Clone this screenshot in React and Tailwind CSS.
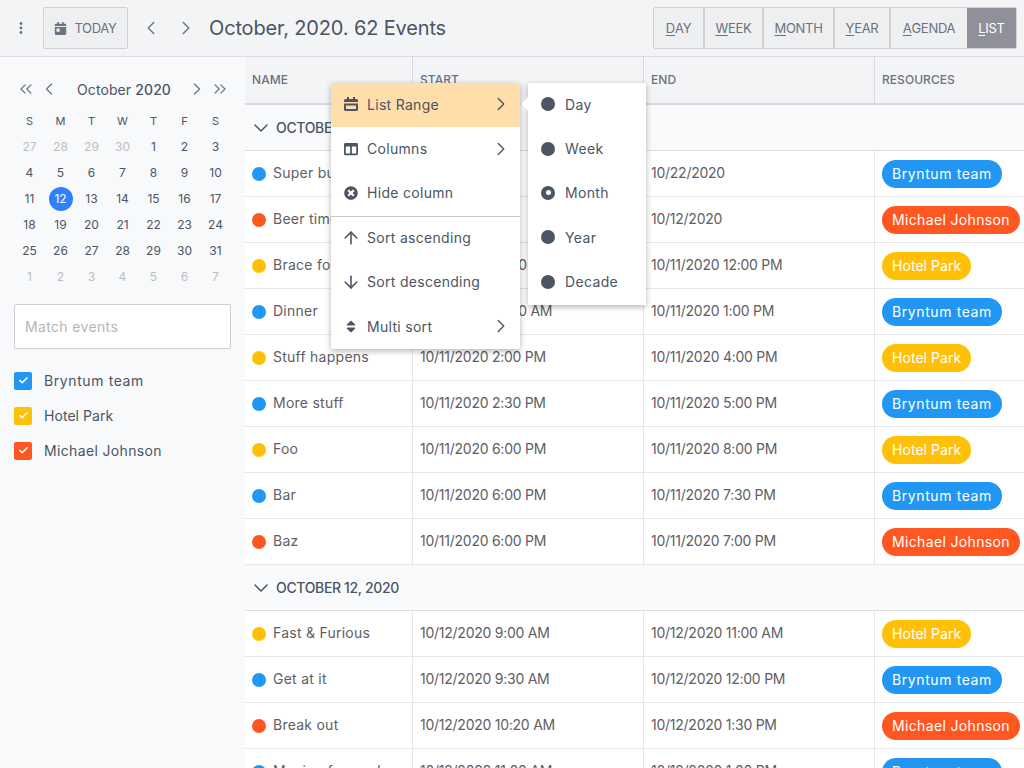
import React from "react";
import { ChevronLeft, ChevronRight, ChevronDown, ChevronsLeft, ChevronsRight, ArrowUp, ArrowDown, Check } from "lucide-react";
import { FaCalendarDay, FaColumns, FaTimesCircle, FaSort } from "react-icons/fa";

const F = { b: "#2196f3", o: "#ff5722", y: "#ffc107" };
const N = { b: "Bryntum team", o: "Michael Johnson", y: "Hotel Park" };
const T = { b: "tracking-[0.6px]", o: "tracking-[0.35px]", y: "tracking-[0.05px]" };

const group1 = [
  ["Super bug fix", "10/12/2020", "10/22/2020", "b"],
  ["Beer time", "10/11/2020", "10/12/2020", "o"],
  ["Brace for it", "10/11/2020 10:00 AM", "10/11/2020 12:00 PM", "y"],
  ["Dinner", "10/11/2020 10:30 AM", "10/11/2020 1:00 PM", "b"],
  ["Stuff happens", "10/11/2020 2:00 PM", "10/11/2020 4:00 PM", "y"],
  ["More stuff", "10/11/2020 2:30 PM", "10/11/2020 5:00 PM", "b"],
  ["Foo", "10/11/2020 6:00 PM", "10/11/2020 8:00 PM", "y"],
  ["Bar", "10/11/2020 6:00 PM", "10/11/2020 7:30 PM", "b"],
  ["Baz", "10/11/2020 6:00 PM", "10/11/2020 7:00 PM", "o"],
];
const group2 = [
  ["Fast & Furious", "10/12/2020 9:00 AM", "10/12/2020 11:00 AM", "y"],
  ["Get at it", "10/12/2020 9:30 AM", "10/12/2020 12:00 PM", "b"],
  ["Break out", "10/12/2020 10:20 AM", "10/12/2020 1:30 PM", "o"],
  ["Moving forward", "10/12/2020 11:00 AM", "10/12/2020 1:00 PM", "b"],
];

const weeks = [
  [27, 28, 29, 30, 1, 2, 3],
  [4, 5, 6, 7, 8, 9, 10],
  [11, 12, 13, 14, 15, 16, 17],
  [18, 19, 20, 21, 22, 23, 24],
  [25, 26, 27, 28, 29, 30, 31],
  [1, 2, 3, 4, 5, 6, 7],
];

const COLS = "grid grid-cols-[168px_231px_231px_1fr]";

function Row({ r }) {
  const [name, start, end, k] = r;
  return (
    <div className={`${COLS} h-[46px] border-b border-[#e6e6e8] bg-white text-[14px] text-[#5e5e63]`}>
      <div className="flex items-center gap-[7px] pl-[7px] border-r border-[#e6e6e8] overflow-hidden whitespace-nowrap tracking-[0.25px]">
        <span className="w-[14px] h-[14px] rounded-full shrink-0" style={{ background: F[k] }} />
        <span className="pb-[2px]">{name}</span>
      </div>
      <div className="flex items-center pl-[7px] pb-[2px] border-r border-[#e6e6e8] whitespace-nowrap tracking-[-0.25px]">{start}</div>
      <div className="flex items-center pl-[7px] pb-[2px] border-r border-[#e6e6e8] whitespace-nowrap tracking-[-0.25px]">{end}</div>
      <div className="flex items-center pl-[7px]">
        <span className={`h-[28px] flex items-center rounded-[14px] px-[10px] text-white whitespace-nowrap ${T[k]}`} style={{ background: F[k] }}>{N[k]}</span>
      </div>
    </div>
  );
}

function Group({ label }) {
  return (
    <div className="h-[46px] flex items-center gap-[3px] pl-[4px] border-b border-[#dcdde0] bg-[#f9fafc] text-[14px] font-medium tracking-[-0.35px] text-[#4b5563]">
      <ChevronDown size={24} strokeWidth={1.5} />
      <span className="pb-[1px]">{label}</span>
    </div>
  );
}

function MenuItem({ icon, label, arrow, active, sep }) {
  return (
    <div className={`h-[44.4px] flex items-center pl-[13px] pr-[8px] pb-[2px] text-[14px] tracking-[0.3px] text-[#4b5563] ${active ? "bg-[#ffdeab] rounded-t-[2px]" : ""} ${sep ? "border-t border-[#c9c7d3]" : ""}`}>
      <span className="w-[14px] flex justify-center mr-[9px]">{icon}</span>
      <span className="flex-1">{label}</span>
      {arrow && <ChevronRight size={22} strokeWidth={1.5} />}
    </div>
  );
}

function Radio({ label, on }) {
  return (
    <div className="h-[44.4px] flex items-center pl-[13px] pb-[2px] text-[14px] tracking-[0.35px] text-[#4b5563]">
      <span className="w-[14px] h-[14px] rounded-full bg-[#4b5563] mr-[10px] flex items-center justify-center">
        {on && <span className="w-[5px] h-[5px] rounded-full bg-white" />}
      </span>
      {label}
    </div>
  );
}

function Check2({ c, label, t }) {
  return (
    <div className={`h-[35px] flex items-center gap-[12px] text-[14px] text-[#4b5563] ${t}`}>
      <span className="w-[18px] h-[18px] rounded-[2px] flex items-center justify-center" style={{ background: c }}>
        <Check size={11} strokeWidth={3.5} color="white" />
      </span>
      {label}
    </div>
  );
}

function ViewBtn({ u, rest, w, active, last }) {
  return (
    <div className={`${w} flex items-center justify-center pt-[1px] text-[13px] tracking-[-0.3px] ${active ? "bg-[#90909b] text-white" : `text-[#6b7280] ${last ? "" : "border-r-2 border-[#cfcfd2]"}`}`}>
      <u className="underline-offset-2">{u}</u>{rest}
    </div>
  );
}

export default function App() {
  return (
    <div className="w-[1024px] h-[768px] overflow-hidden relative flex flex-col bg-white" style={{ fontFamily: "Inter, 'Liberation Sans', sans-serif" }}>
      <header className="h-[57px] shrink-0 flex items-center bg-[#f3f4f6] border-b border-[#dcdde0] pl-[19px] pr-[7px]">
        <svg width="4" height="12" viewBox="0 0 4 12" className="text-[#6b7280]" fill="currentColor">
          <circle cx="2" cy="1.5" r="1.4" /><circle cx="2" cy="6" r="1.4" /><circle cx="2" cy="10.5" r="1.4" />
        </svg>
        <button className="ml-[20px] w-[85px] h-[42px] flex items-center justify-center gap-[7px] pt-[1px] bg-[#eeeff1] border border-[#d1d2d5] rounded-[2px] text-[13px] tracking-[-0.3px] text-[#6b7280]">
          <FaCalendarDay size={13} />TODAY
        </button>
        <ChevronLeft className="ml-[12px] text-[#6b7280]" size={22} strokeWidth={1.5} />
        <ChevronRight className="ml-[13px] text-[#6b7280]" size={22} strokeWidth={1.5} />
        <h1 className="ml-[12px] text-[20px] tracking-[-0.15px] text-[#4b5563] whitespace-nowrap">October, 2020. 62 Events</h1>
        <div className="ml-auto h-[42px] w-[364px] flex border border-[#d1d2d5] rounded-[2px] bg-[#eeeff1] overflow-hidden">
          <ViewBtn u="D" rest="AY" w="w-[51px]" />
          <ViewBtn u="W" rest="EEK" w="w-[59px]" />
          <ViewBtn u="M" rest="ONTH" w="w-[71px]" />
          <ViewBtn u="Y" rest="EAR" w="w-[56px]" />
          <ViewBtn u="A" rest="GENDA" w="w-[76px]" last />
          <ViewBtn u="L" rest="IST" w="flex-1" active />
        </div>
      </header>

      <div className="flex flex-1 min-h-0">
        <aside className="w-[245px] shrink-0 bg-[#f8f9fb] pl-[14px] pr-[14px] pt-[20px]">
          <div className="h-[24px] flex items-center text-[#6b7280]">
            <span className="w-[24px] flex justify-center"><ChevronsLeft size={20} strokeWidth={1.5} /></span>
            <span className="w-[22px] flex justify-center"><ChevronLeft size={20} strokeWidth={1.5} /></span>
            <span className="flex-1 pl-[3px] text-center text-[14px] tracking-[0.1px] text-[#4b5563]">October <span className="font-medium">2020</span></span>
            <span className="w-[23px] flex justify-center"><ChevronRight size={20} strokeWidth={1.5} /></span>
            <span className="w-[23px] flex justify-center"><ChevronsRight size={20} strokeWidth={1.5} /></span>
          </div>
          <div className="grid grid-cols-7 mt-[7px] h-[26px] items-center text-center text-[11px] text-[#4b5563]">
            {["S", "M", "T", "W", "T", "F", "S"].map((d, i) => <div key={i}>{d}</div>)}
          </div>
          {weeks.map((w, i) => (
            <div key={i} className="grid grid-cols-7 h-[26px] items-center justify-items-center text-[12px] text-[#4b5563]">
              {w.map((d, j) => {
                const other = (i === 0 && d > 20) || i === 5;
                const sel = i === 2 && d === 12;
                return (
                  <div key={j} className={`w-[24px] h-[24px] rounded-full flex items-center justify-center ${sel ? "bg-[#2f80ff] text-white" : other ? "text-[#bdbdbd]" : ""}`}>{d}</div>
                );
              })}
            </div>
          ))}
          <div className="mt-[14px] h-[45px] flex items-center pl-[10px] bg-white border border-[#cfd0d4] rounded-[2px] text-[14px] tracking-[0.35px] text-[#b5b5b8]">Match events</div>
          <div className="mt-[14px]">
            <Check2 c={F.b} label="Bryntum team" t="tracking-[0.6px]" />
            <Check2 c={F.y} label="Hotel Park" t="tracking-[0.05px]" />
            <Check2 c={F.o} label="Michael Johnson" t="tracking-[0.35px]" />
          </div>
        </aside>

        <main className="flex-1 min-w-0 overflow-hidden">
          <div className={`${COLS} h-[48px] bg-[#f3f4f6] border-b-2 border-[#d9dadd] text-[12px] font-medium tracking-[0.05px] text-[#6b7280]`}>
            {["NAME", "START", "END", "RESOURCES"].map((h, i) => (
              <div key={h} className={`flex items-center pl-[7px] ${i < 3 ? "border-r border-[#d9dadd]" : ""}`}>{h}</div>
            ))}
          </div>
          <Group label="OCTOBER 11, 2020" />
          {group1.map((r) => <Row key={r[0]} r={r} />)}
          <Group label="OCTOBER 12, 2020" />
          {group2.map((r) => <Row key={r[0]} r={r} />)}
        </main>
      </div>

      <div className="absolute left-[331px] top-[83px] w-[189px] bg-white rounded-[2px] shadow-[0_2px_6px_rgba(0,0,0,0.3)]">
        <MenuItem active arrow label="List Range" icon={
          <svg width="14" height="14" viewBox="0 0 14 14" fill="currentColor">
            <path d="M3 0h2v2h4V0h2v2h1.5A1.5 1.5 0 0 1 14 3.500V5H0V3.500A1.500 1.500 0 0 1 1.500 2H3zM0 6.500h14v6a1.500 1.500 0 0 1-1.500 1.500h-11A1.500 1.500 0 0 1 0 12.500zM2 8.500v3.500h10V8.500z" fillRule="evenodd" />
          </svg>
        } />
        <MenuItem arrow label="Columns" icon={<FaColumns size={14} />} />
        <MenuItem label="Hide column" icon={<FaTimesCircle size={14} />} />
        <MenuItem sep label="Sort ascending" icon={<ArrowUp className="shrink-0" size={20} strokeWidth={1.9} />} />
        <MenuItem label="Sort descending" icon={<ArrowDown className="shrink-0" size={20} strokeWidth={1.9} />} />
        <MenuItem arrow label="Multi sort" icon={<FaSort size={15} />} />
      </div>
      <div className="absolute left-[528px] top-[83px] w-[118px] bg-white shadow-[0_2px_6px_rgba(0,0,0,0.3)]">
        <span className="absolute left-[-5px] top-[16px] w-[10px] h-[10px] rotate-45 bg-white" />
        <div className="relative">
          <Radio label="Day" />
          <Radio label="Week" />
          <Radio label="Month" on />
          <Radio label="Year" />
          <Radio label="Decade" />
        </div>
      </div>
    </div>
  );
}
